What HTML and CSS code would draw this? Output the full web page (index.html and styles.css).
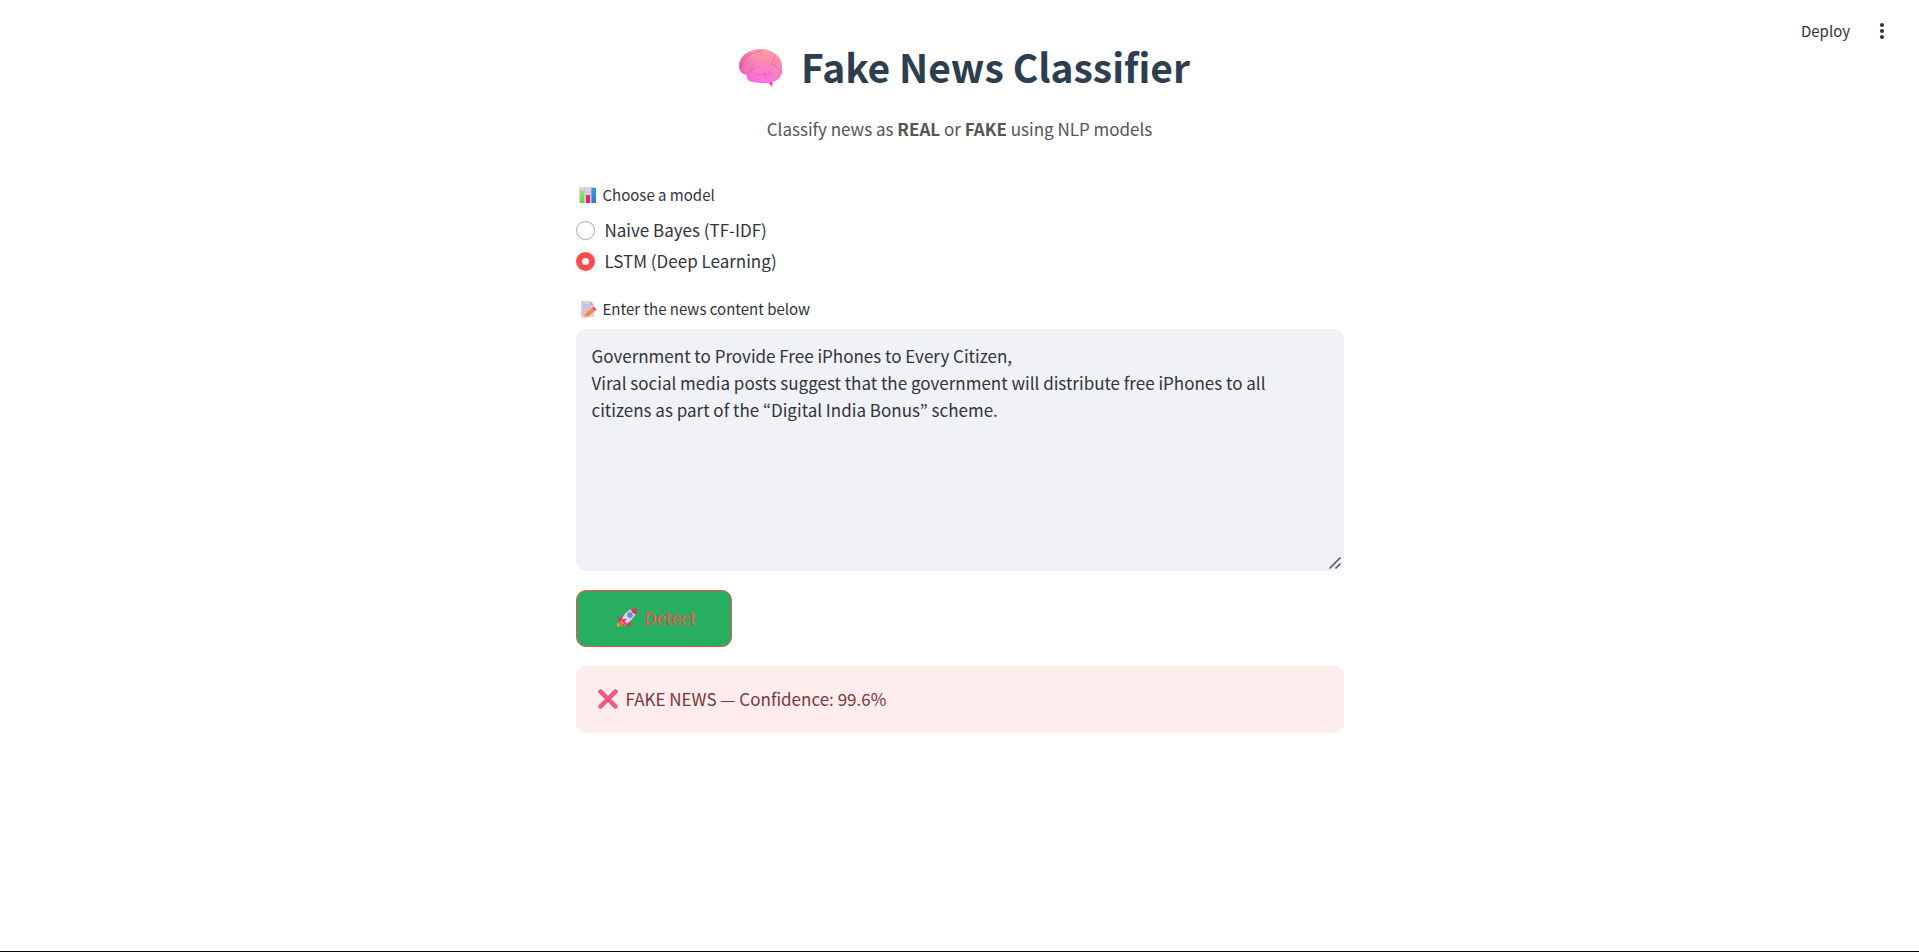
FILE: index.html
```html
<!DOCTYPE html>
<html lang="en">
<head>
<meta charset="utf-8">
<meta name="viewport" content="width=device-width, initial-scale=1">
<title>Fake News Classifier</title>
<link rel="stylesheet" href="styles.css">
</head>
<body>
<header class="toolbar">
  <button class="toolbar-button" type="button">Deploy</button>
  <button class="toolbar-button menu-button" type="button" aria-label="Main menu">
    <svg width="6" height="18" viewBox="0 0 6 18" fill="#31333f" aria-hidden="true"><circle cx="3" cy="3" r="2.1"/><circle cx="3" cy="9" r="2.1"/><circle cx="3" cy="15" r="2.1"/></svg>
  </button>
</header>
<main class="content">
  <h1 class="title">
    <svg width="62" height="48" viewBox="0 -4 62 48" aria-hidden="true">
      <defs>
        <linearGradient id="brain" x1=".65" y1="0" x2=".4" y2="1"><stop offset="0" stop-color="#ff9c9c"/><stop offset=".5" stop-color="#fb83bd"/><stop offset="1" stop-color="#ff6ee8"/></linearGradient>
        <linearGradient id="brain-shade" x1="0" y1="0" x2="1" y2="0"><stop offset="0" stop-color="#c94f93" stop-opacity=".5"/><stop offset=".4" stop-color="#e0609c" stop-opacity="0"/></linearGradient>
      </defs>
      <path d="M37 33l6 8 1-8z" fill="#e836ad"/>
      <path d="M10 20C10 12 17 6 22 5C27 2 39 2 45 7C51 10 54 17 53 23C54 30 49 35 43 36C36 38 30 37 25 36C20 36 17 33 18 29C13 28 10 25 10 20z" fill="url(#brain)"/>
      <path d="M10 20C10 12 17 6 22 5C27 2 39 2 45 7C51 10 54 17 53 23C54 30 49 35 43 36C36 38 30 37 25 36C20 36 17 33 18 29C13 28 10 25 10 20z" fill="url(#brain-shade)"/>
      <path d="M12 21C13 13 18 10 23 8M18 29C20 25 23 23 27 22M22 25C21 22 22 20 25 19M27 29C32 27 37 30 43 27M36 25C35 29 36 31 38 31M52 26C49 21 45 18 41 18M42 18C44 16 45 13 46 10M25 8C29 5 32 5 34 6L31 8" fill="none" stroke="#d64c8f" stroke-width="1" stroke-linecap="round" opacity=".5"/>
      <path d="M22 10C27 7 32 8 36 5M46 22C49 25 49 29 47 32" fill="none" stroke="#ffc0b5" stroke-width="1" stroke-linecap="round" opacity=".5"/>
    </svg>
    <span>Fake News Classifier</span>
  </h1>
  <p class="subtitle">Classify news as <strong>REAL</strong> or <strong>FAKE</strong> using NLP models</p>

  <fieldset class="models">
    <legend class="field-label">
      <svg width="24" height="20" viewBox="0 0 24 20" aria-hidden="true">
        <defs><linearGradient id="green" x1="0" y1="0" x2="0" y2="1"><stop offset="0" stop-color="#96e77b"/><stop offset="1" stop-color="#6bd22f"/></linearGradient><linearGradient id="blue" x1="0" y1="0" x2="0" y2="1"><stop offset="0" stop-color="#2f9ae2"/><stop offset="1" stop-color="#3474d4"/></linearGradient></defs>
        <rect x="3" y="2" width="17" height="16" rx="1" fill="#ddd2e3"/>
        <path d="M3 7h17M3 12h17M9 2v16M15 2v16" stroke="#c5b8cf" stroke-width=".7"/>
        <rect x="4" y="5" width="4" height="13" fill="url(#green)"/>
        <rect x="10" y="10" width="4" height="8" fill="#d82975"/>
        <rect x="15.500" y="3" width="4.500" height="15" fill="url(#blue)"/>
      </svg>
      <span>Choose a model</span>
    </legend>
    <label class="option"><input type="radio" name="model" value="nb"><span>Naive Bayes (TF-IDF)</span></label>
    <label class="option"><input type="radio" name="model" value="lstm" checked><span>LSTM (Deep Learning)</span></label>
  </fieldset>

  <div class="news">
    <label class="field-label" for="news">
      <svg width="24" height="20" viewBox="0 0 24 20" aria-hidden="true">
        <path d="M5 2h9l4 4v12H5z" fill="#d8cee0"/>
        <path d="M14 2l4 4h-4z" fill="#b8abc4"/>
        <path d="M7 6h6M7 9h8M7 12h6M7 15h4" stroke="#b7abc2" stroke-width=".9"/>
        <path d="M9 15l7-6 2.500 3-7 6-4 .5z" fill="#ff7c3a"/>
        <path d="M16 9l2-1.500 2.500 3-2 1.500z" fill="#f04c54"/>
        <path d="M9 15l2.500 3-4 .5z" fill="#ecb58f"/>
        <path d="M10 16l7-6" stroke="#ffad4c" stroke-width=".8"/>
      </svg>
      <span>Enter the news content below</span>
    </label>
    <div class="news-box">
      <textarea class="news-input" id="news">Government to Provide Free iPhones to Every Citizen,
Viral social media posts suggest that the government will distribute free iPhones to all citizens as part of the “Digital India Bonus” scheme.</textarea>
      <svg class="grip" width="12" height="12" viewBox="0 0 12 12" fill="none" stroke="#4d4f55" stroke-width="1.500" aria-hidden="true"><path d="M.5 11.500l11-11M6.500 11.500l5-5"/></svg>
    </div>
  </div>

  <button class="detect" type="button">
    <svg width="22" height="22" viewBox="0 0 22 22" aria-hidden="true">
      <path d="M4 14L1 17v3l4-1 3-3z" fill="#f79225"/>
      <path d="M2 16l3-2 3 3-3 2z" fill="#f06b22"/>
      <path d="M8 8L3 11l-1 4 5-1zM14 13l-3 3v5l4-4z" fill="#e92c70"/>
      <path d="M5 14C7 8 11 4 16 2l4 4c-2 5-6 9-11 12z" fill="#dfd3e7"/>
      <path d="M15 2.500L20 1.500l1 1-1 4.500c-2 0-5-2-5-4.500z" fill="#e92a4d"/>
      <path d="M5 13l4 5 2-1-5-6z" fill="#ee3278"/>
      <path d="M7 14l3-2" stroke="#c02361" stroke-width="1.500"/>
      <circle cx="14" cy="8" r="2.700" fill="#6d7fa8"/><circle cx="14" cy="8" r="1.900" fill="#4b9be4"/>
    </svg>
    <span>Detect</span>
  </button>

  <div class="alert" role="alert">
    <svg width="20" height="20" viewBox="0 0 20 20" aria-hidden="true">
      <path d="M2.500 2.500l15 15M17.500 2.500l-15 15" stroke="#e83f70" stroke-width="4.200" stroke-linecap="round"/>
      <path d="M2.500 2.300l15 15M17.300 2.500l-15 15" stroke="#ff5c80" stroke-width="2.800" stroke-linecap="round"/>
    </svg>
    <span>FAKE NEWS — Confidence: 99.6%</span>
  </div>
</main>
</body>
</html>
```
FILE: styles.css
```css
* {
  box-sizing: border-box;
}

body {
  margin: 0;
  min-height: 100vh;
  border-bottom: 1px solid #000;
  background: #fff;
  color: #31333f;
  font: 17px/27px "Noto Sans CJK KR", "Noto Sans", sans-serif;
}

svg {
  display: block;
  flex: none;
}

button,
textarea {
  font: inherit;
  color: inherit;
}

.toolbar {
  position: absolute;
  top: 0;
  right: 0;
  display: flex;
  align-items: center;
  gap: 29px;
  padding: 17px 34px;
}

.toolbar-button {
  padding: 0;
  border: 0;
  background: none;
  font-size: 15px;
  cursor: pointer;
}

.content {
  display: flex;
  flex-direction: column;
  width: 100%;
  max-width: 768px;
  margin: 0 auto;
  padding: 40px 0;
}

.title {
  display: flex;
  justify-content: center;
  align-items: center;
  gap: 10px;
  margin: 0;
  color: #2c3e50;
  font-size: 39px;
  font-weight: 700;
  line-height: 52px;
}

.subtitle {
  margin: 23px 0 0;
  color: #555;
  text-align: center;
}

.models {
  display: flex;
  flex-direction: column;
  gap: 4px;
  min-width: 0;
  margin: 39px 0 0;
  padding: 0;
  border: 0;
}

.field-label {
  display: flex;
  align-items: center;
  gap: 3px;
  padding: 0;
  font-size: 15px;
  line-height: 28px;
}

.models .field-label {
  margin-bottom: 8px;
}

.option {
  display: flex;
  align-items: flex-start;
  align-self: flex-start;
  gap: 10px;
  min-height: 27px;
  line-height: 25px;
}

.option input {
  appearance: none;
  width: 19px;
  height: 19px;
  margin: 4px 0 0;
  border: 1px solid #a9aab0;
  border-radius: 50%;
  background: #fff;
}

.option input:checked {
  border: 6px solid #ff4b4b;
  background: #f0f2f6;
}

.news {
  margin-top: 20px;
}

.news-box {
  position: relative;
  margin-top: 6px;
}

.news-input {
  display: block;
  width: 100%;
  height: 242px;
  padding: 13px 20px 13px 16px;
  border: 0;
  border-radius: 10px;
  outline: 0;
  background: #f0f2f6;
  resize: none;
}

.grip {
  position: absolute;
  right: 3px;
  bottom: 2px;
}

.detect {
  display: flex;
  align-items: center;
  align-self: flex-start;
  gap: 7px;
  margin-top: 19px;
  padding: 13px 35px 15px 39px;
  border: 1px solid #ff4b4b;
  border-radius: 10px;
  background: #27ae60;
  color: #ff4b4b;
  cursor: pointer;
}

.alert {
  display: flex;
  align-items: center;
  gap: 8px;
  margin-top: 19px;
  padding: 19px 22px 21px;
  border-radius: 10px;
  background: #ffecec;
  color: #7d353b;
}
```
